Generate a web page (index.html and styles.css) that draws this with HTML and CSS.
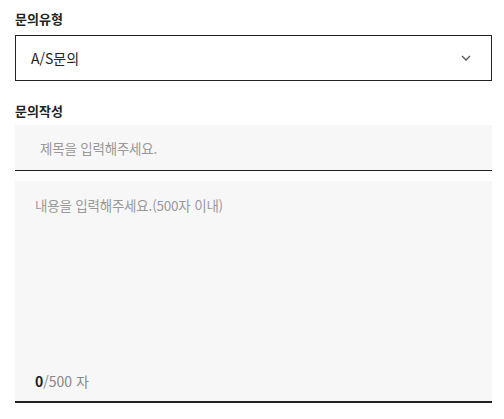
FILE: index.html
```html
<!DOCTYPE html>
<html lang="ko">
<head>
<meta charset="utf-8">
<link rel="stylesheet" href="styles.css">
</head>
<body>
<div class="form">
  <div class="label first">문의유형</div>
  <div class="select">
    <span class="select-value">A/S문의</span>
    <svg class="chevron" width="10" height="6" viewBox="0 0 10 6"><path d="M1 1 L5 5 L9 1" fill="none" stroke="#555" stroke-width="1.3"/></svg>
  </div>
  <div class="label second">문의작성</div>
  <div class="title-input"><span class="placeholder">제목을 입력해주세요.</span></div>
  <div class="textarea">
    <span class="placeholder">내용을 입력해주세요.(500자 이내)</span>
    <div class="counter"><b>0</b>/500 자</div>
  </div>
</div>
</body>
</html>
```
FILE: styles.css
```css
html, body {
  margin: 0;
  padding: 0;
  background: #fff;
}
.form {
  width: 477px;
  margin-left: 15px;
  padding-top: 9px;
  font-family: "Noto Sans CJK KR", "Noto Sans", sans-serif;
  display: flex;
  flex-direction: column;
}
.label {
  font-size: 13px;
  line-height: 19px;
  font-weight: 700;
  color: #222;
}
.label.first { margin-bottom: 7px; }
.label.second { margin-top: 20px; margin-bottom: 5px; }
.select {
  box-sizing: border-box;
  height: 46px;
  border: 1px solid #222;
  display: flex;
  align-items: center;
  justify-content: space-between;
  padding: 0 20px 0 15px;
}
.select-value {
  font-size: 14px;
  color: #222;
  line-height: 20px;
}
.title-input {
  box-sizing: border-box;
  height: 46px;
  background: #f7f7f7;
  border-bottom: 1px solid #222;
  display: flex;
  align-items: center;
  padding-left: 25px;
}
.placeholder {
  font-size: 13.5px;
  letter-spacing: -0.2px;
  line-height: 20px;
  color: #999;
}
.textarea {
  box-sizing: border-box;
  margin-top: 10px;
  height: 222px;
  background: #f7f7f7;
  border-bottom: 2px solid #222;
  padding: 14px 20px 10px;
  display: flex;
  flex-direction: column;
  justify-content: space-between;
}
.counter {
  font-size: 14px;
  line-height: 20px;
  color: #888;
}
.counter b {
  color: #222;
  font-weight: 700;
}
```
